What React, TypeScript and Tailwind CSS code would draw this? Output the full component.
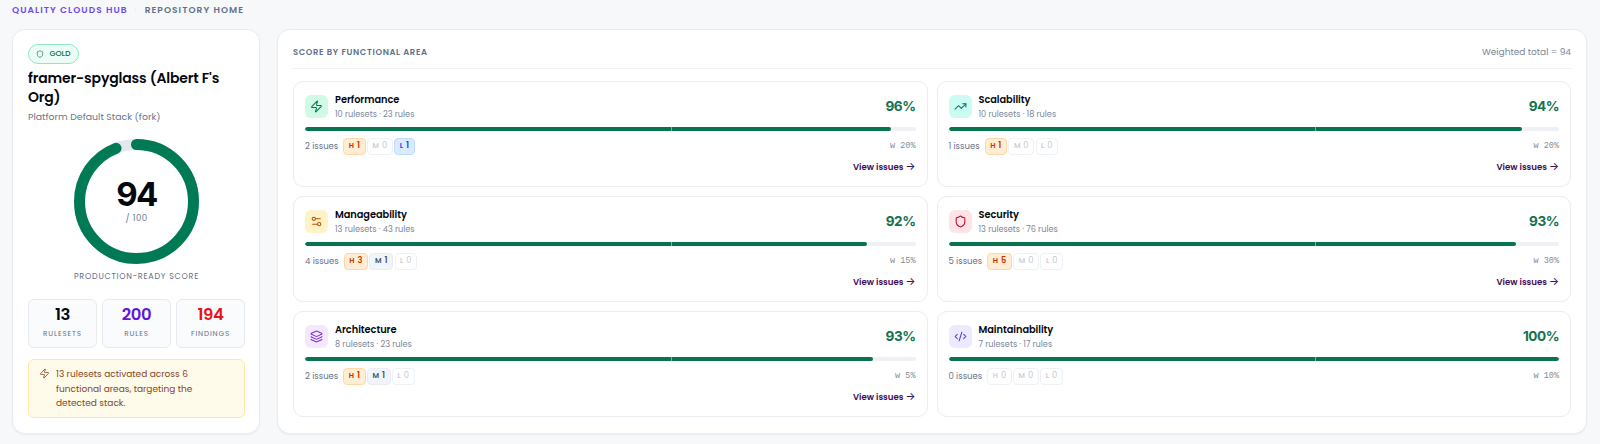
import {
  CodeXml,
  Layers,
  Settings2,
  Shield,
  TrendingUp,
  Zap,
  type LucideIcon,
} from "lucide-react";

type Area = {
  title: string;
  rulesets: number;
  rules: number;
  score: number;
  issues: number;
  high: number;
  medium: number;
  low: number;
  weight: number;
  icon: LucideIcon;
  iconClass: string;
};

const areas: Area[] = [
  {
    title: "Performance",
    rulesets: 10,
    rules: 23,
    score: 96,
    issues: 2,
    high: 1,
    medium: 0,
    low: 1,
    weight: 20,
    icon: Zap,
    iconClass: "bg-[#d0fae5] text-[#007a55]",
  },
  {
    title: "Scalability",
    rulesets: 10,
    rules: 18,
    score: 94,
    issues: 1,
    high: 1,
    medium: 0,
    low: 0,
    weight: 20,
    icon: TrendingUp,
    iconClass: "bg-[#cbfbf1] text-[#00786f]",
  },
  {
    title: "Manageability",
    rulesets: 13,
    rules: 43,
    score: 92,
    issues: 4,
    high: 3,
    medium: 1,
    low: 0,
    weight: 15,
    icon: Settings2,
    iconClass: "bg-[#fef3c6] text-[#bb4d00]",
  },
  {
    title: "Security",
    rulesets: 13,
    rules: 76,
    score: 93,
    issues: 5,
    high: 5,
    medium: 0,
    low: 0,
    weight: 30,
    icon: Shield,
    iconClass: "bg-[#ffe4e6] text-[#c70036]",
  },
  {
    title: "Architecture",
    rulesets: 8,
    rules: 23,
    score: 93,
    issues: 2,
    high: 1,
    medium: 1,
    low: 0,
    weight: 5,
    icon: Layers,
    iconClass: "bg-[#f3e8ff] text-[#7a2fd8]",
  },
  {
    title: "Maintainability",
    rulesets: 7,
    rules: 17,
    score: 100,
    issues: 0,
    high: 0,
    medium: 0,
    low: 0,
    weight: 10,
    icon: CodeXml,
    iconClass: "bg-[#ede9fe] text-[#5b35d5]",
  },
];

const stats = [
  { value: 13, label: "Rulesets", color: "text-[#05070f]" },
  { value: 200, label: "Rules", color: "text-[#6017dc]" },
  { value: 194, label: "Findings", color: "text-[#e7141c]" },
];

const chipStyles = {
  H: "border-[#ffd6a7] bg-[#ffedd4] text-[#ca3500]",
  M: "border-[#e8edf3] bg-[#f1f5f9] text-[#45556c]",
  L: "border-[#bedbff] bg-[#dbeafe] text-[#1447e6]",
};

function Chip({ level, count }: { level: "H" | "M" | "L"; count: number }) {
  return (
    <span
      className={`flex h-[17px] items-center gap-[3px] rounded-[4px] border px-[4.5px] pb-[2px] leading-none ${
        count > 0 ? chipStyles[level] : "border-[#eef1f5] bg-white text-[#c3c8d1]"
      }`}
    >
      <span className={`text-[7.3px] ${count > 0 ? "font-semibold" : "font-medium"}`}>{level}</span>
      <span className={`text-[8.3px] ${count > 0 ? "font-semibold" : ""}`}>{count}</span>
    </span>
  );
}

function AreaCard({ area }: { area: Area }) {
  const Icon = area.icon;
  return (
    <div className="flex h-[106px] flex-col rounded-[10px] border border-[#eaedf1] bg-white px-[11px] pt-[13px]">
      <div className="flex h-[23px] items-center">
        <div className={`flex size-[23px] items-center justify-center rounded-[6px] ${area.iconClass}`}>
          <Icon size={13} strokeWidth={1.9} />
        </div>
        <div className="ml-[7px] flex flex-col">
          <h3 className="text-[9.8px] leading-[14px] font-semibold tracking-[-0.05px] text-[#05070f]">{area.title}</h3>
          <p className="text-[8.2px] leading-[14px] text-[#7c8698]">
            {area.rulesets} rulesets · {area.rules} rules
          </p>
        </div>
        <span className="ml-auto font-['Inter',sans-serif] text-[13.6px] leading-none font-bold tracking-[-0.5px] text-[#15734f]">
          {area.score}%
        </span>
      </div>
      <div className="relative mt-[9px] h-1 shrink-0 overflow-hidden rounded-full bg-[#f0f1f4]">
        <div className="h-full rounded-full bg-[#07734f]" style={{ width: `${area.score}%` }} />
        <span className="absolute inset-y-0 left-[60%] w-px bg-[#90a1b9]" />
      </div>
      <div className="mt-[7px] flex h-[17px] items-center">
        <span className="text-[8.5px] text-[#62708a]">{area.issues} issues</span>
        <div className="ml-[5px] flex gap-[1.5px]">
          <Chip level="H" count={area.high} />
          <Chip level="M" count={area.medium} />
          <Chip level="L" count={area.low} />
        </div>
        <span className="ml-auto font-['Liberation_Mono',monospace] text-[8.5px] text-[#858d99]">w {area.weight}%</span>
      </div>
      {area.issues > 0 && (
        <a className="mt-[5px] flex items-center gap-[2px] self-end text-[8.6px] leading-[14px] font-semibold text-[#430d53]">
          View issues <span className="font-['Inter',sans-serif] text-[10.5px] font-medium">→</span>
        </a>
      )}
    </div>
  );
}

function ScoreRing({ score }: { score: number }) {
  const radius = 57;
  const length = 2 * Math.PI * radius;
  return (
    <div className="relative size-[125px]">
      <svg viewBox="0 0 125 125" className="size-full -rotate-90" fill="none">
        <circle cx="62.5" cy="62.5" r={radius} stroke="#e2e8f0" strokeWidth="11" />
        <circle
          cx="62.5"
          cy="62.5"
          r={radius}
          stroke="#007a55"
          strokeWidth="11"
          strokeLinecap="round"
          strokeDasharray={`${(length * score) / 100} ${length}`}
        />
      </svg>
      <div className="absolute inset-0 flex flex-col items-center pt-[37px]">
        <span className="font-['Inter',sans-serif] text-[33px] leading-[36px] font-bold tracking-[-1.6px] text-[#05070f]">
          {score}
        </span>
        <span className="text-[8.5px] leading-[12px] tracking-[0.5px] text-[#6c7688]">/ 100</span>
      </div>
    </div>
  );
}

export default function App() {
  return (
    <main className="h-[444px] w-[1600px] overflow-hidden bg-[#f6f8fa] font-['Poppins','Inter',sans-serif]">
      <nav className="flex h-[29px] items-start gap-[7px] pt-[4px] pl-[12px] text-[9px] leading-[13px] font-semibold uppercase">
        <span className="tracking-[1.07px] text-[#7048ee]">Quality Clouds Hub</span>
        <span className="font-normal text-[#cad5e2]">·</span>
        <span className="ml-px tracking-[1.07px] text-[#62708a]">Repository Home</span>
      </nav>

      <div className="flex gap-[17px] pl-[12px]">
        <aside className="flex h-[405px] w-[248px] flex-col rounded-[13px] border border-[#e9edf2] bg-white pt-[14px] pr-[14px] pl-[15px] shadow-xs">
          <div className="flex h-[20px] w-[51px] items-center justify-center gap-[5px] rounded-full border border-[#8ee8c3] bg-[#ecfdf5] text-[#007a55]">
            <Shield size={8} strokeWidth={2} />
            <span className="text-[7.8px] font-medium">GOLD</span>
          </div>
          <h1 className="mt-[5px] text-[14px] leading-[19px] font-semibold tracking-[-0.15px] text-[#05070f]">
            framer-spyglass (Albert F's Org)
          </h1>
          <p className="mt-[3px] text-[9.4px] leading-[14px] text-[#6c7688]">Platform Default Stack (fork)</p>

          <div className="mt-[15px] flex flex-col items-center">
            <ScoreRing score={94} />
            <p className="mt-[7px] text-[8px] leading-[12px] tracking-[0.75px] text-[#62708a] uppercase">
              Production-ready score
            </p>
          </div>

          <div className="mt-[16px] grid grid-cols-3 gap-[5px]">
            {stats.map((stat) => (
              <div
                key={stat.label}
                className="flex h-[49px] flex-col items-center rounded-[6px] border border-[#e6ebf1] bg-[#f9fbfd] pt-[5px]"
              >
                <span className={`text-[16.5px] leading-[20px] font-semibold tracking-[-0.4px] ${stat.color}`}>
                  {stat.value}
                </span>
                <span className="mt-[3px] text-[7.2px] leading-[12px] tracking-[0.85px] text-[#62708a] uppercase">
                  {stat.label}
                </span>
              </div>
            ))}
          </div>

          <div className="mt-[11px] flex h-[59px] gap-[6px] rounded-[6px] border border-[#fee9a6] bg-[#fffbeb] pt-[7px] pl-[10px] text-[#86451f]">
            <Zap size={11} strokeWidth={1.8} className="mt-px shrink-0" />
            <p className="w-[150px] text-[9px] leading-[14.5px]">
              13 rulesets activated across 6 functional areas, targeting the detected stack.
            </p>
          </div>
        </aside>

        <section className="h-[405px] w-[1310px] rounded-[13px] border border-[#e9edf2] bg-white px-[15px] shadow-xs">
          <header className="flex h-[39px] items-center justify-between border-b border-[#f0f2f5] pt-[7px]">
            <h2 className="text-[8.4px] font-semibold tracking-[0.65px] text-[#62708a] uppercase">
              Score by functional area
            </h2>
            <span className="text-[9px] text-[#7c8698]">Weighted total = 94</span>
          </header>
          <div className="mt-[12px] grid grid-cols-2 gap-[9px]">
            {areas.map((area) => (
              <AreaCard key={area.title} area={area} />
            ))}
          </div>
        </section>
      </div>
    </main>
  );
}
